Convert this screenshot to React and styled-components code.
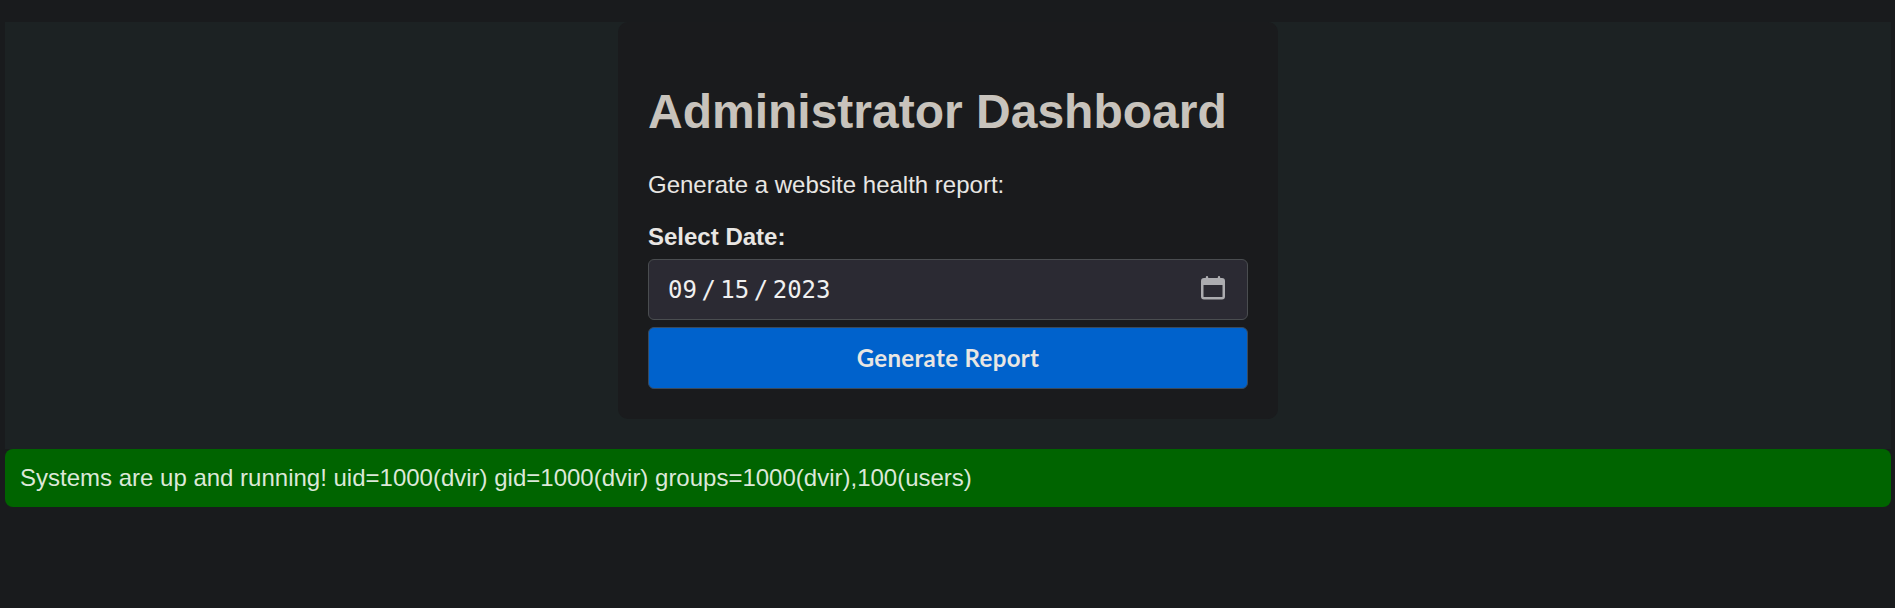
import React from "react";
import styled, { createGlobalStyle } from "styled-components";

const GlobalStyle = createGlobalStyle`
  html, body {
    margin: 0;
    background: #191b1d;
  }
  body {
    padding: 22px 4px 0 5px;
    min-height: 608px;
    box-sizing: border-box;
    font-family: "Liberation Sans", Arial, sans-serif;
  }
`;

const Hero = styled.section`
  display: flex;
  justify-content: center;
  height: 427px;
  background: #1c2223;
`;

const Card = styled.main`
  box-sizing: border-box;
  width: 660px;
  height: 397px;
  padding: 30px;
  background: #1a1b1d;
  border-radius: 10px;
`;

const Title = styled.h1`
  margin: 32px 0 0;
  font-size: 48px;
  line-height: 55px;
  font-weight: 700;
  color: #c8c3bc;
`;

const Intro = styled.p`
  margin: 32px 0 0;
  font-size: 24px;
  line-height: 28px;
  color: #e8e6e3;
`;

const Label = styled.label`
  display: block;
  margin-top: 24px;
  font-size: 24px;
  line-height: 28px;
  font-weight: 700;
  color: #e8e6e3;
`;

const DateField = styled.div`
  position: relative;
  margin-top: 8px;
`;

const DateInput = styled.input`
  display: block;
  box-sizing: border-box;
  width: 100%;
  height: 61px;
  padding: 0 19px;
  background: #2b2a33;
  border: 1px solid #4a4d50;
  border-radius: 6px;
  color: #f0f0f0;
  font-family: "DejaVu Sans Mono", monospace;
  font-size: 24px;
  color-scheme: dark;
  outline: none;

  &::-webkit-datetime-edit-fields-wrapper,
  &::-webkit-datetime-edit {
    padding: 0;
  }
  &::-webkit-datetime-edit-month-field,
  &::-webkit-datetime-edit-day-field,
  &::-webkit-datetime-edit-year-field {
    padding: 0;
  }
  &::-webkit-datetime-edit-text {
    padding: 0 4.5px;
    font-family: "Liberation Sans", sans-serif;
  }
  &::-webkit-calendar-picker-indicator {
    opacity: 0;
  }
`;

const CalendarIcon = styled.svg`
  position: absolute;
  top: 17px;
  right: 23px;
  width: 24px;
  height: 24px;
  pointer-events: none;
`;

const SubmitButton = styled.button`
  display: block;
  box-sizing: border-box;
  width: 100%;
  height: 62px;
  margin-top: 7px;
  padding-bottom: 3px;
  background: #0062cc;
  border: 1px solid #3a4a5c;
  border-radius: 6px;
  color: #e8e6e3;
  font-family: "Lato", sans-serif;
  font-size: 24px;
  font-weight: 700;
  letter-spacing: 0.35px;
`;

const StatusBanner = styled.div`
  box-sizing: border-box;
  height: 58px;
  padding: 0 15px;
  display: flex;
  align-items: center;
  background: #006400;
  border-radius: 8px;
  color: #dce8d8;
  font-size: 24px;
`;

export default function App() {
  return (
    <>
      <GlobalStyle />
      <Hero>
        <Card>
          <Title>Administrator Dashboard</Title>
          <Intro>Generate a website health report:</Intro>
          <Label htmlFor="date">Select Date:</Label>
          <DateField>
            <DateInput id="date" type="date" defaultValue="2023-09-15" />
            <CalendarIcon viewBox="0 0 24 24" aria-hidden="true">
              <path
                fill="#acacb0"
                fillRule="evenodd"
                d="M4.8 1.2a1.2 1.2 0 0 1 2.4 0V2h9.6v-.8a1.2 1.2 0 0 1 2.4 0V2H21a3 3 0 0 1 3 3v15.5a3 3 0 0 1-3 3H3a3 3 0 0 1-3-3V5a3 3 0 0 1 3-3h1.8zM2.5 9v11.5a.5.5 0 0 0 .5.5h18a.5.5 0 0 0 .5-.5V9z"
              />
            </CalendarIcon>
          </DateField>
          <SubmitButton type="button">Generate Report</SubmitButton>
        </Card>
      </Hero>
      <StatusBanner>
        Systems are up and running! uid=1000(dvir) gid=1000(dvir) groups=1000(dvir),100(users)
      </StatusBanner>
    </>
  );
}
